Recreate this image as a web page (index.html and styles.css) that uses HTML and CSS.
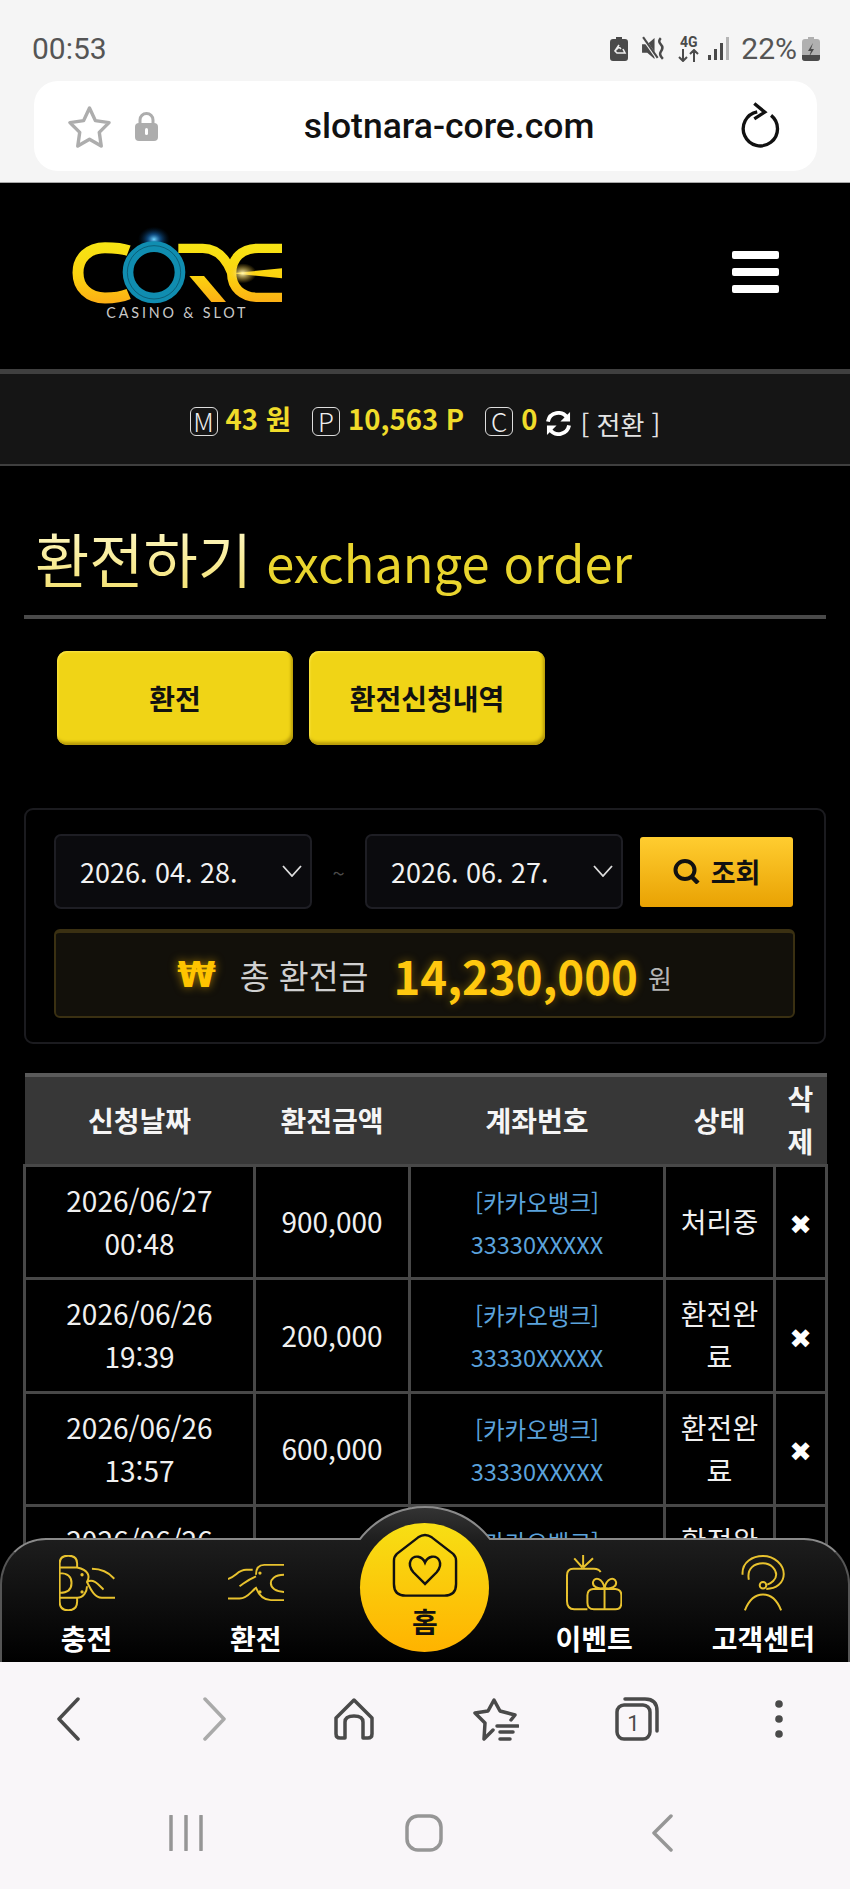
FILE: index.html
```html
<!DOCTYPE html>
<html lang="ko">
<head>
<meta charset="utf-8">
<title>환전하기</title>
<link rel="stylesheet" href="styles.css">
</head>
<body>
<div class="phone">
  <div class="status">
    <span class="time">00:53</span>
    <div class="status-icons">
      <svg class="si-bat" viewBox="0 0 18 24"><path d="M6 0h6v2h3a3 3 0 0 1 3 3v16a3 3 0 0 1-3 3H3a3 3 0 0 1-3-3V5a3 3 0 0 1 3-3h3z" fill="#4a4a4a"/><path d="M9 8l-4 6 2 2h8l-2-4M6 13l3-3 2 2" fill="none" stroke="#eee" stroke-width="1.6"/></svg>
      <svg class="si-mute" viewBox="0 0 24 24"><path d="M1 8h5l7-6v20l-7-6H1z" fill="#4a4a4a"/><path d="M2 2l14 20" stroke="#f5f5f5" stroke-width="3"/><path d="M2 1l14 20" stroke="#4a4a4a" stroke-width="2"/><path d="M19 2q-3 3 0 6t0 7q-2 3 2 7" fill="none" stroke="#4a4a4a" stroke-width="2.400"/></svg>
      <div class="si-net"><span class="net-label">4G</span><svg class="net-arrows" viewBox="0 0 21 13"><path d="M5 0v12M1 8l4 4 4-4M16 13V1M12 5l4-4 4 4" fill="none" stroke="#4a4a4a" stroke-width="2"/></svg></div>
      <svg class="si-signal" viewBox="0 0 22 24"><rect x="0" y="18" width="3" height="5" fill="#4a4a4a"/><rect x="6" y="12" width="3" height="11" fill="#4a4a4a"/><rect x="12" y="6" width="3" height="17" fill="#4a4a4a"/><rect x="18" y="0" width="3" height="23" fill="#b5b5b5"/></svg>
      <span class="pct">22%</span>
      <svg class="si-charge" viewBox="0 0 18 24"><path d="M6 0h6v2h3a3 3 0 0 1 3 3v16a3 3 0 0 1-3 3H3a3 3 0 0 1-3-3V5a3 3 0 0 1 3-3h3z" fill="#b0b0b0"/><path d="M0 18h18v3a3 3 0 0 1-3 3H3a3 3 0 0 1-3-3z" fill="#4a4a4a"/><path d="M11 6l-5 8h3l-2 6 5-8H9z" fill="#4a4a4a"/></svg>
    </div>
  </div>
  <div class="url-wrap">
    <div class="url-bar">
      <div class="url-left">
        <svg class="url-star" viewBox="0 0 46 44"><path d="M23 3l6 13 14 2-10 10 2 14-12-7-12 7 2-14L3 18l14-2z" fill="none" stroke="#adadad" stroke-width="3.5" stroke-linejoin="round"/></svg>
        <svg class="url-lock" viewBox="0 0 23 29"><path d="M5 12V8a6.500 6.500 0 0 1 13 0v4" fill="none" stroke="#adadad" stroke-width="3"/><rect x="0" y="11" width="23" height="18" rx="4" fill="#adadad"/><rect x="10" y="16" width="3" height="7" rx="1.500" fill="#fff"/></svg>
      </div>
      <span class="url-text">slotnara-core.com</span>
      <svg class="url-reload" viewBox="0 0 42 48"><path d="M14 12a18 18 0 1 0 15 0" fill="none" stroke="#111" stroke-width="3.500" transform="rotate(14 21 28)"/><path d="M15 2l11 9-11 7" fill="none" stroke="#111" stroke-width="3.500"/></svg>
    </div>
  </div>

  <main class="site">
    <header class="site-head">
      <svg class="logo" viewBox="0 0 780 360">
        <defs>
          <linearGradient id="gold" gradientUnits="userSpaceOnUse" x1="0" y1="95" x2="0" y2="280"><stop offset="0" stop-color="#f6e515"/><stop offset=".55" stop-color="#fbd30f"/><stop offset="1" stop-color="#fcae15"/></linearGradient>
          <radialGradient id="glow"><stop offset="0" stop-color="#6fd4ff"/><stop offset=".4" stop-color="#1467b0" stop-opacity=".7"/><stop offset="1" stop-color="#002040" stop-opacity="0"/></radialGradient>
          <radialGradient id="flare"><stop offset="0" stop-color="#fff6b0"/><stop offset="1" stop-color="#f4c020" stop-opacity="0"/></radialGradient>
        </defs>
        <ellipse cx="312" cy="88" rx="48" ry="38" fill="url(#glow)"/>
        <path d="M236 122C212 113 190 113 165 113 115 113 84 145 84 188 84 232 115 264 165 264 190 264 212 262 236 252" fill="none" stroke="url(#gold)" stroke-width="33"/>
        <ellipse cx="312" cy="187" rx="78" ry="77" fill="none" stroke="#108db0" stroke-width="32"/>
        <ellipse cx="312" cy="187" rx="80" ry="80" fill="none" stroke="#07495e" stroke-width="2"/>
        <path d="M385 115H458C500 115 528 145 545 188" fill="none" stroke="url(#gold)" stroke-width="28"/>
        <path d="M418 198H462L528 276H484z" fill="url(#gold)"/>
        <path d="M696 115H625C575 115 545 145 545 190 545 232 575 262 625 262H696" fill="none" stroke="url(#gold)" stroke-width="28"/>
        <path d="M545 190L696 175V205z" fill="url(#gold)"/>
        <ellipse cx="578" cy="190" rx="42" ry="30" fill="url(#flare)"/>
        <text class="logo-tag" x="382" y="323" text-anchor="middle">CASINO &amp; SLOT</text>
      </svg>
      <div class="burger"><i></i><i></i><i></i></div>
    </header>

    <section class="balance">
      <span class="badge">M</span><b class="amt amt-m">43 원</b>
      <span class="badge badge-p">P</span><b class="amt amt-p">10,563 P</b>
      <span class="badge badge-c">C</span><b class="amt amt-c">0</b>
      <svg class="swap" viewBox="0 0 28 26"><path d="M3 11A11 11 0 0 1 23 7M25 15A11 11 0 0 1 5 19" fill="none" stroke="#fff" stroke-width="4"/><path d="M26 1v10H16zM2 25V15h10z" fill="#fff"/></svg>
      <span class="swap-text">[ 전환 ]</span>
    </section>

    <h1 class="title"><span class="title-ko">환전하기</span> <span class="title-en">exchange order</span></h1>

    <nav class="tabs">
      <a class="tab">환전</a>
      <a class="tab">환전신청내역</a>
    </nav>

    <section class="panel">
      <div class="filter">
        <div class="date"><span class="date-val">2026. 04. 28.</span><svg class="caret" viewBox="0 0 20 12"><path d="M1 1l9 10 9-10" fill="none" stroke="#ddd" stroke-width="1.800"/></svg></div>
        <span class="tilde">~</span>
        <div class="date"><span class="date-val">2026. 06. 27.</span><svg class="caret" viewBox="0 0 20 12"><path d="M1 1l9 10 9-10" fill="none" stroke="#ddd" stroke-width="1.800"/></svg></div>
        <button class="search"><svg class="search-ico" viewBox="0 0 27 25"><ellipse cx="12" cy="11" rx="9.500" ry="9" fill="none" stroke="#111" stroke-width="4"/><path d="M18 17l7 7" stroke="#111" stroke-width="4.500"/></svg>조회</button>
      </div>
      <div class="total">
        <span class="won-mark">₩</span>
        <span class="total-label">총 환전금</span>
        <strong class="total-num">14,230,000</strong>
        <span class="total-unit">원</span>
      </div>
    </section>

    <table class="list">
      <thead>
        <tr><th class="c1">신청날짜</th><th class="c2">환전금액</th><th class="c3">계좌번호</th><th class="c4">상태</th><th class="c5">삭제</th></tr>
      </thead>
      <tbody>
        <tr><td>2026/06/27<br>00:48</td><td>900,000</td><td class="acct"><span class="bank">[카카오뱅크]</span><br>33330XXXXX</td><td>처리중</td><td class="del">✖</td></tr>
        <tr><td>2026/06/26<br>19:39</td><td>200,000</td><td class="acct"><span class="bank">[카카오뱅크]</span><br>33330XXXXX</td><td>환전완료</td><td class="del">✖</td></tr>
        <tr><td>2026/06/26<br>13:57</td><td>600,000</td><td class="acct"><span class="bank">[카카오뱅크]</span><br>33330XXXXX</td><td>환전완료</td><td class="del">✖</td></tr>
        <tr><td>2026/06/26<br>10:12</td><td>300,000</td><td class="acct"><span class="bank">[카카오뱅크]</span><br>33330XXXXX</td><td>환전완료</td><td class="del">✖</td></tr>
      </tbody>
    </table>

    <nav class="dock">
      <a class="dock-item">
        <svg class="dock-ico" viewBox="0 0 170 170"><g class="dock-line"><path d="M2 38V25Q2 2 28 2 55 2 55 25V38M2 130V142Q2 168 28 168 55 168 55 142V130M2 38V130M2 38H55M2 130H55M2 55Q38 55 38 85 38 115 2 115M55 38C90 45 95 65 85 82 95 100 105 128 130 130H170M100 42C125 42 150 52 168 72M85 82C105 70 120 90 135 105M55 130C75 130 85 110 85 95"/></g><circle cx="70" cy="60" r="5" class="dock-dot"/><circle cx="70" cy="112" r="5" class="dock-dot"/></svg>
        <span>충전</span>
      </a>
      <a class="dock-item">
        <svg class="dock-ico" viewBox="0 0 170 170"><g class="dock-line"><path d="M0 73C25 65 30 45 55 45H75M170 30H110C90 30 85 45 85 60M0 132H35C60 132 70 110 85 100 95 125 110 137 130 137H170M35 95C50 85 60 75 85 65M170 60C140 60 130 75 130 85 130 100 145 112 170 112"/></g><circle cx="97" cy="55" r="5" class="dock-dot"/><circle cx="97" cy="112" r="5" class="dock-dot"/></svg>
        <span>환전</span>
      </a>
      <div class="dock-home">
        <div class="dome"></div>
        <a class="home-btn">
          <svg class="home-ico" viewBox="0 0 68 66"><path d="M27 4Q34-1 41 4L63 21Q66 24 66 28V52Q66 64 54 64H14Q2 64 2 52V28Q2 24 5 21Z" fill="none" stroke="#111" stroke-width="2.500"/><path d="M34 52L22 40C14 30 21 23 27 24Q32 25 34 30 36 25 41 24C47 23 54 30 46 40Z" fill="none" stroke="#111" stroke-width="2.500"/></svg>
          <span>홈</span>
        </a>
      </div>
      <a class="dock-item">
        <svg class="dock-ico" viewBox="0 0 170 170"><g class="dock-line"><path d="M105 52Q100 42 85 42H22Q3 42 3 62V140Q3 165 25 165H65M25 10L50 38M52 0V38M82 10L52 38M65 122Q65 105 82 103H150Q168 105 168 122V145Q168 165 150 165H85Q65 165 65 145ZM117 103V165M117 100C95 105 80 95 82 82 88 65 110 70 117 100 124 70 146 65 152 82 154 95 139 105 117 100"/></g></svg>
        <span>이벤트</span>
      </a>
      <a class="dock-item">
        <svg class="dock-ico" viewBox="-20 0 170 170"><g class="dock-line"><path d="M3 60C0 20 35 3 65 3 100 3 128 30 128 58 128 85 105 103 75 103M22 75C15 40 40 25 65 25 90 25 105 45 105 60 105 75 90 86 78 90M10 168C25 130 45 120 65 120 85 120 105 130 120 168"/><circle cx="65" cy="92" r="10"/></g></svg>
        <span>고객센터</span>
      </a>
    </nav>
  </main>

  <div class="toolbar">
    <svg class="tb-chev tb-back" viewBox="0 0 24 44"><path d="M22 2L3 22l19 20" class="tb-line"/></svg>
    <svg class="tb-chev tb-off" viewBox="0 0 24 44"><path d="M2 2l19 20L2 42" class="tb-line"/></svg>
    <svg class="tb-home" viewBox="0 0 40 42"><path d="M20 2L38 20V36Q38 40 34 40H29V24Q29 18 20 18T11 24V40H6Q2 40 2 36V20z" class="tb-line"/></svg>
    <svg class="tb-star" viewBox="0 0 46 43"><path d="M20 32L11 41 12 25 2 15 15 13 21 2 27 13 42 17 38 22" class="tb-line"/><path d="M24 28H45M27 34H40M27 41H37" class="tb-line"/></svg>
    <svg class="tb-tabs" viewBox="0 0 44 44"><rect x="2" y="8" width="33" height="34" rx="7" class="tb-line"/><path d="M10 2H30Q42 2 42 14V34" class="tb-line"/><text x="18.500" y="34" text-anchor="middle" class="tb-num">1</text></svg>
    <svg class="tb-more" viewBox="0 0 8 38"><circle cx="4" cy="4" r="3.800"/><circle cx="4" cy="19" r="3.800"/><circle cx="4" cy="34" r="3.800"/></svg>
  </div>
  <div class="sysbar">
    <svg class="sb-recent" viewBox="0 0 34 36"><path d="M2 1V35M17 1V35M32 1V35" class="sb-line"/></svg>
    <svg class="sb-home" viewBox="0 0 38 38"><rect x="2" y="2" width="34" height="34" rx="11" class="sb-line"/></svg>
    <svg class="sb-back" viewBox="0 0 22 38"><path d="M20 2L3 19l17 17" class="sb-line"/></svg>
  </div>
</div>
</body>
</html>
```
FILE: styles.css
```css
* { box-sizing: border-box; }
html, body { margin: 0; padding: 0; }
body { background: #f5f5f5; font-family: "Noto Sans CJK KR", "Noto Sans", sans-serif; }

.phone { width: 850px; height: 1889px; display: flex; flex-direction: column; overflow: hidden; }

/* device status bar */
.status { height: 81px; padding: 16px 30px 0 32px; display: flex; align-items: center; justify-content: space-between; color: #555; font-family: Roboto, sans-serif; font-size: 30px; }
.status-icons { display: flex; align-items: center; }
.si-bat { width: 18px; height: 24px; margin-right: 13px; }
.si-mute { width: 25px; height: 25px; margin-right: 12px; }
.si-net { width: 21px; display: flex; flex-direction: column; align-items: center; gap: 1px; margin-right: 9px; color: #4a4a4a; font-family: Roboto, sans-serif; font-weight: 700; }
.net-label { font-size: 14px; line-height: 12px; }
.net-arrows { width: 21px; height: 13px; }
.si-signal { width: 22px; height: 24px; margin-right: 11px; }
.pct { color: #555; }
.si-charge { width: 18px; height: 24px; margin-left: 5px; }

/* browser address bar */
.url-wrap { height: 101px; padding: 0 33px 11px 34px; }
.url-bar { height: 90px; background: #fff; border-radius: 24px; display: flex; align-items: center; padding: 0 37px 0 33px; }
.url-left { display: flex; align-items: center; gap: 23px; width: 91px; }
.url-star { width: 45px; height: 43px; flex: none; }
.url-lock { width: 23px; height: 29px; flex: none; }
.url-text { flex: 1; text-align: center; font-family: Roboto, sans-serif; font-weight: 500; font-size: 35.500px; color: #111; }
.url-reload { width: 40px; height: 47px; flex: none; margin-top: -4px; }

/* site */
.site { flex: none; height: 1480px; background: #000; border-top: 1px solid #a8a8a8; position: relative; overflow: hidden; color: #fff; }
.site-head { height: 186px; display: flex; align-items: flex-start; justify-content: space-between; padding: 27px 71px 0 50px; }
.logo { width: 260px; height: 120px; }
.logo-tag { font-family: Lato, "Noto Sans", sans-serif; font-size: 43px; fill: #c9c9c9; letter-spacing: 8.500px; }
.burger { width: 47px; margin-top: 41px; display: flex; flex-direction: column; gap: 9px; }
.burger i { display: block; height: 8px; background: #fff; border-radius: 2px; }

.balance { height: 97px; background: #151515; border-top: 5px solid #3f3f3f; border-bottom: 2px solid #3f3f3f; display: flex; align-items: center; justify-content: center; }
.badge { width: 28px; height: 29px; margin-top: 4px; border: 1px solid #ddd; border-radius: 6px; display: flex; align-items: center; justify-content: center; font-size: 26px; font-weight: 300; color: #eee; line-height: 1; }
.badge-p { margin-left: 21px; }
.badge-c { margin-left: 21px; }
.amt { color: #f0dc2a; font-size: 27.500px; font-weight: 700; margin-left: 8px; line-height: 28px; margin-top: -3px; }
.swap { width: 27px; height: 25px; margin-left: 8px; margin-top: 9px; }
.swap-text { font-size: 26px; color: #e4e4e4; margin-left: 8px; margin-top: 9px; }

.title { margin: 53px 24px 0; padding: 0 0 0 11px; height: 100px; border-bottom: 4px solid #4a4a4a; font-weight: 400; font-size: 50.500px; line-height: 78px; white-space: nowrap; }
.title-ko { font-size: 59px; background: linear-gradient(#fffbd0, #f3df6a); -webkit-background-clip: text; background-clip: text; color: transparent; }
.title-en { color: #e9d52e; }

.tabs { display: flex; gap: 16px; padding: 32px 0 0 57px; }
.tab { width: 236px; height: 94px; border-radius: 10px; background: #f0d416; box-shadow: inset -2px -3px 3px #b89c0a, inset 1px 1px 2px #fbe64a; color: #111; font-size: 28px; font-weight: 700; display: flex; align-items: center; justify-content: center; }

.panel { margin: 63px 24px 0; height: 236px; border: 2px solid #1b1b1f; border-radius: 9px; padding: 24px 28px 0; }
.filter { display: flex; align-items: center; height: 75px; }
.date { width: 258px; height: 75px; border: 2px solid #1e1e24; border-radius: 7px; background: #0b0b0e; display: flex; align-items: center; padding-left: 24px; }
.date-val { width: 158px; white-space: nowrap; font-size: 27px; color: #f2f2f2; }
.caret { width: 20px; height: 12px; margin-left: 44px; margin-top: -2px; }
.tilde { width: 53px; text-align: center; color: #4a4a4a; font-size: 22px; }
.search { width: 153px; height: 70px; margin-left: 17px; border: 0; border-radius: 3px; background: linear-gradient(#ffcd30, #e9a203); display: flex; align-items: center; justify-content: center; gap: 11px; font-family: inherit; font-size: 27px; font-weight: 700; color: #111; padding: 0; }
.search-ico { width: 27px; height: 25px; }
.total { margin-top: 20px; width: 741px; height: 89px; background: #12100a; border: 2px solid #3a3012; border-top-width: 4px; border-radius: 6px; display: flex; align-items: center; justify-content: center; }
.won-mark { color: #ffc400; font-family: "DejaVu Sans", sans-serif; font-size: 35px; font-weight: 700; text-shadow: 0 0 10px rgba(255, 190, 0, .6); }
.total-label { color: #d0d0d0; font-size: 32.500px; margin-left: 24px; }
.total-num { color: #ffc80f; font-size: 45.500px; font-weight: 700; margin-left: 25px; text-shadow: 0 0 10px rgba(255, 190, 0, .4); }
.total-unit { color: #b5b5b5; font-size: 26px; margin-left: 10px; margin-top: 6px; }

.list { margin: 29px 24px 0 23px; width: 802px; table-layout: fixed; border-collapse: collapse; font-size: 28px; text-align: center; }
.c1 { width: 230px; } .c2 { width: 155px; } .c3 { width: 255px; } .c4 { width: 110px; } .c5 { width: 52px; }
.list th { height: 90px; background: #373737; border-top: 4px solid #5a5a5a; padding: 0 10px; font-weight: 700; line-height: 43px; color: #f5f5f5; }
.list td { height: 113.500px; border: 3px solid #484848; padding: 0 8px; line-height: 43px; color: #f0f0f0; background: #000; }
.acct.acct { color: #5ba3dc; font-size: 23.500px; line-height: 42px; padding-top: 2px; }
.del.del { font-family: "DejaVu Sans", sans-serif; font-size: 27px; color: #fff; padding: 6px 0 0; }

/* floating dock */
.dock { position: absolute; left: 0; right: 0; bottom: 0; height: 124px; background: linear-gradient(#1d1d1d, #000); border-top: 2px solid #8a8a8a; border-left: 2px solid #555; border-right: 2px solid #555; border-radius: 46px 46px 0 0; display: grid; grid-template-columns: repeat(5, 1fr); padding-top: 15px; }
.dock-item { display: flex; flex-direction: column; align-items: center; color: #fff; font-size: 28px; font-weight: 700; line-height: 40px; }
.dock-ico { width: 56px; height: 56px; margin-bottom: 7px; }
.dock-line { fill: none; stroke: #e8c22e; stroke-width: 6; }
.dock-dot { fill: #e8c22e; }
.dock-home { position: relative; }
.dome { position: absolute; left: 2px; top: -49px; width: 166px; height: 166px; border-radius: 50%; border: 2px solid #8a8a8a; background: linear-gradient(#333 0, #1d1d1d 34px); clip-path: inset(0 0 132px 0); }
.home-btn { position: absolute; left: 20px; top: -32px; width: 129px; height: 129px; border-radius: 50%; background: linear-gradient(#f7df14, #ffb300); display: flex; flex-direction: column; align-items: center; padding-top: 10px; color: #111; font-size: 28px; font-weight: 700; line-height: 40px; }
.home-ico { width: 66px; height: 65px; margin-bottom: 3px; }

/* browser toolbar + navigation bar */
.toolbar { height: 114px; background: #f9f6f9; display: grid; grid-template-columns: repeat(6, 1fr); justify-items: center; align-items: center; }
.tb-line { fill: none; stroke: #4a4a4a; stroke-width: 3.500; stroke-linecap: round; stroke-linejoin: round; }
.tb-chev { width: 24px; height: 44px; }
.tb-back { margin-right: 5px; }
.tb-off { margin-left: 6px; }
.tb-off .tb-line { stroke: #aaa; }
.tb-home { width: 40px; height: 42px; }
.tb-star { width: 46px; height: 43px; }
.tb-tabs { width: 44px; height: 44px; }
.tb-num { font-family: Roboto, sans-serif; font-size: 22px; fill: #4a4a4a; }
.tb-more { width: 8px; height: 38px; fill: #4a4a4a; }
.sysbar { flex: 1; background: #f9f6f9; padding-right: 3px; display: grid; grid-template-columns: repeat(3, 238px); justify-content: center; justify-items: center; align-items: center; }
.sb-line { fill: none; stroke: #969696; stroke-width: 3.500; stroke-linecap: round; stroke-linejoin: round; }
.sb-recent { width: 34px; height: 36px; }
.sb-home { width: 38px; height: 38px; }
.sb-back { width: 22px; height: 38px; }
```
